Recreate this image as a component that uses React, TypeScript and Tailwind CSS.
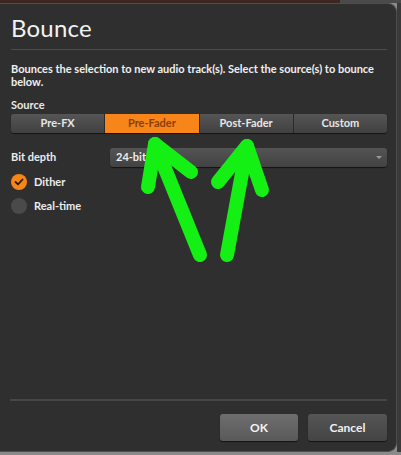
import React from 'react';

const font = { fontFamily: 'Lato, "Open Sans", sans-serif' };

const segments = ['Pre-FX', 'Pre-Fader', 'Post-Fader', 'Custom'];

const Arrows = () => (
  <svg className="absolute left-0 top-0 pointer-events-none" width="401" height="455" viewBox="0 0 401 455">
    <g stroke="#14f014" strokeWidth="14" strokeLinecap="round" strokeLinejoin="round" fill="none">
      <path d="M200 255 L155 144" />
      <path d="M148 187 L155 144 L191 172" />
      <path d="M227 255 L247 146" />
      <path d="M218 182 L247 146 L262 190" />
    </g>
  </svg>
);

const App = () => {
  const selected = 'Pre-Fader';

  return (
    <div className="relative w-[401px] h-[455px] bg-[#8a8a8a] overflow-hidden" style={font}>
      <div className="flex h-[3px]">
        <div className="w-[340px] bg-[#3b2621]" />
        <div className="flex-1 bg-[#4a4a4a]" />
      </div>
      <div className="flex h-[449px]">
        <div className="w-[397px] h-full bg-[#2f2f2f] rounded-r-[9px] border-r border-t border-b border-[#4d4d4d] flex flex-col">
          <div className="pl-[11px] pr-[9px] pt-[9px]">
            <h1 className="text-[24px] leading-[30px] text-[#f2f2f2] font-normal tracking-[0.2px]">Bounce</h1>
            <div className="mt-[6px] h-px bg-[#4c4c4c]" />
            <p className="mt-[12px] text-[11px] leading-[13px] font-bold text-[#f0f0f0]">
              Bounces the selection to new audio track(s). Select the source(s) to bounce below.
            </p>
            <div className="mt-[10px] text-[11px] leading-[13px] font-bold text-[#e8e8e8]">Source</div>
            <div className="mt-[3px] flex h-[19px] rounded-[3px] overflow-hidden shadow-[0_1px_1px_rgba(0,0,0,0.6)]">
              {segments.map((s, i) => (
                <div
                  key={s}
                  className={
                    s === selected
                      ? 'flex-1 flex items-center justify-center text-[11px] font-bold bg-[#f78519] text-[#8a3e05] border-l border-[#2a2a2a]'
                      : 'flex-1 flex items-center justify-center text-[11px] font-bold bg-gradient-to-b from-[#555555] to-[#414141] text-[#e6e6e6] ' +
                        (i > 0 ? 'border-l border-[#2a2a2a]' : '')
                  }
                >
                  {s}
                </div>
              ))}
            </div>
            <div className="mt-[15px] flex items-center">
              <div className="w-[99px] text-[11px] font-bold text-[#ececec]">Bit depth</div>
              <div className="flex-1 h-[19px] rounded-[3px] bg-gradient-to-b from-[#545454] to-[#424242] shadow-[0_1px_1px_rgba(0,0,0,0.6)] flex items-center justify-between pl-[6px] pr-[5px]">
                <span className="text-[11px] font-bold text-[#eeeeee]">24-bit</span>
                <span className="w-0 h-0 border-l-[3px] border-r-[3px] border-t-[3px] border-l-transparent border-r-transparent border-t-[#9a9a9a]" />
              </div>
            </div>
            <div className="mt-[7px] flex items-center gap-[7px]">
              <div className="w-[16px] h-[16px] rounded-full bg-[#f78519] flex items-center justify-center">
                <svg width="10" height="8" viewBox="0 0 10 8">
                  <path d="M1.5 4 L4 6.3 L8.5 1.5" stroke="#2a1a0a" strokeWidth="1.8" fill="none" strokeLinecap="round" strokeLinejoin="round" />
                </svg>
              </div>
              <span className="text-[11px] font-bold text-[#ececec]">Dither</span>
            </div>
            <div className="mt-[7px] flex items-center gap-[7px]">
              <div className="w-[16px] h-[16px] rounded-full bg-[#4a4a4a]" />
              <span className="text-[11px] font-bold text-[#ececec]">Real-time</span>
            </div>
          </div>
          <div className="flex-1" />
          <div className="pl-[10px] pr-[9px]">
            <div className="h-[2px] bg-[#474747]" />
            <div className="mt-[13px] flex justify-end gap-[10px]">
              <button className="w-[78px] h-[27px] rounded-[3px] bg-gradient-to-b from-[#6e6e6e] to-[#595959] text-[12px] font-bold text-[#f4f4f4] shadow-[0_1px_1px_rgba(0,0,0,0.6)]">
                OK
              </button>
              <button className="w-[79px] h-[27px] rounded-[3px] bg-gradient-to-b from-[#555555] to-[#444444] text-[12px] font-bold text-[#f0f0f0] shadow-[0_1px_1px_rgba(0,0,0,0.6)]">
                Cancel
              </button>
            </div>
          </div>
          <div className="h-[10px]" />
        </div>
        <div className="flex-1 bg-[#3a3a3a]" />
      </div>
      <div className="h-[3px] bg-[#8a8a8a]" />
      <Arrows />
    </div>
  );
};

export default App;
